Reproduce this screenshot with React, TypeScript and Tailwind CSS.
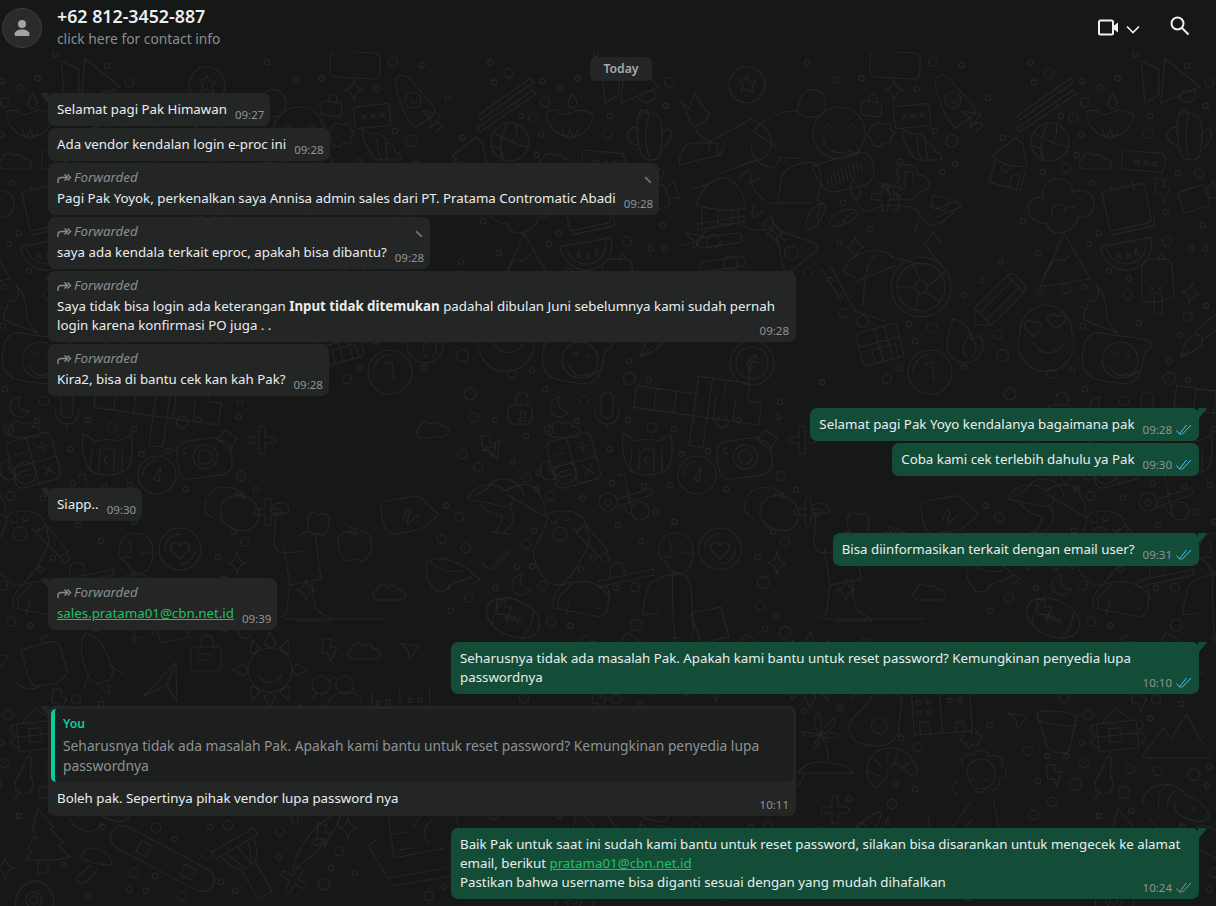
import React from "react";

const F = "[font-family:'Noto_Sans','Open_Sans',sans-serif]";

const z7 = [[22,37,8],[106,90,8],[185,85,8],[350,117,8],[399,35,14],[485,45,8],[405,243,8],[455,273,18],[691,38,8],[746,70,14],[702,97,8],[847,93,8],[901,113,8],[855,157,14],[563,145,8],[783,198,8],[820,203,14],[843,254,8],[1043,251,14],[1050,197,8],[953,85,8],[1007,12,8],[1161,48,8],[1228,97,14],[1217,168,8],[608,264,8],[830,315,8],[798,355,14],[728,366,8],[875,400,8],[1134,370,8],[1197,370,14],[299,335,8],[466,342,8],[427,367,8],[262,410,8],[129,458,8],[209,536,8],[119,577,8],[24,668,14],[90,690,8],[119,740,8],[131,790,14],[188,814,18],[327,822,8],[396,833,14],[345,874,8],[492,735,8],[545,691,8],[602,635,8],[669,514,8],[716,609,8],[797,716,14],[852,712,8],[720,725,8],[983,735,14],[927,663,8],[986,684,8],[867,582,8],[896,549,8],[1097,485,8],[1209,526,8],[1101,574,14],[1172,595,8],[1215,595,8],[1086,620,8],[1218,768,8],[1163,800,14],[1016,820,8],[848,827,8],[594,854,14],[608,917,18],[260,987,14],[298,955,8],[66,996,8],[492,952,8],[755,971,14],[817,961,8],[855,1018,8],[1140,855,8],[1107,933,8],[1108,985,18],[1165,991,8],[630,1032,18]];
const z9 = [[100,45,18],[245,100,14],[308,90,9],[120,165,18],[130,232,14],[195,240,8],[345,148,9],[462,182,14],[356,270,14],[440,243,8],[288,288,8],[97,342,14],[145,382,14],[248,365,8],[325,397,8],[288,413,14],[320,447,8],[362,468,14],[458,475,8],[88,532,14],[48,497,8],[35,597,14],[108,625,14],[288,613,14],[312,572,8],[260,680,8],[307,678,8],[452,688,8],[197,745,8],[338,737,14],[117,773,14],[62,812,8],[363,845,14],[421,857,8],[619,855,18],[558,744,8],[615,742,14],[489,653,8],[563,555,8],[633,603,8],[540,327,8],[547,430,8],[643,438,8],[720,435,8],[755,342,8],[834,333,8],[888,447,8],[676,516,8],[733,546,8],[877,246,18],[925,240,8],[665,263,14],[732,268,8],[594,240,8],[1045,140,14],[1050,187,8],[1045,230,8],[1095,112,18],[1176,126,8],[1052,408,14],[1098,450,8],[1030,575,8],[1065,605,14],[983,652,8],[1000,727,18],[990,797,14],[1040,828,8],[1005,866,8],[1065,877,18]];
const z11 = [[13,63,8],[120,52,8],[303,145,8],[353,172,14],[345,298,8],[285,281,8],[147,327,8],[276,342,14],[569,106,8],[683,182,14],[743,198,8],[799,198,8],[851,218,14],[845,158,8],[714,272,8],[826,284,18],[972,308,18],[989,236,14],[1073,243,14],[1182,254,18],[1227,230,8],[1222,288,8],[755,336,14],[700,375,14],[897,377,8],[994,362,8],[864,76,14],[1051,84,8],[1143,42,8],[792,25,14],[1068,28,14]];
const z12 = [[57,18,8],[309,52,8],[468,53,14],[522,88,8],[631,52,8],[684,46,14],[840,64,14],[621,134,14],[837,141,8],[1016,124,14],[993,174,8],[1065,188,8],[401,188,14],[465,199,8],[191,164,8],[662,217,8],[706,242,8],[387,239,8],[437,242,8],[263,259,8],[547,259,14],[972,222,18],[1286,258,14],[1331,230,8]];

const mod = (x: number) => ((x % 540) + 540) % 540;
const rings: number[][] = [
  ...z7.map(([a, b, r]) => [mod(260 + a / 3), 50 + b / 3, r / 3]),
  ...z9.filter(([, b]) => b > 180).map(([a, b, r]) => [mod(430 + a / 3), 340 + b / 3, r / 3]),
  ...z11.map(([a, b, r]) => [mod(260 + a / 3), 690 + b / 3, r / 3]),
  ...z12.map(([a, b, r]) => [a / 3, 810 + b / 3, r / 3]),
];

const sparkle = "M0-11C2-3 3-2 9 0C3 2 2 3 0 11C-2 3-3 2-9 0C-3-2-2-3 0-11Z";
const lock = "M-7-3h14a3 3 0 0 1 3 3v8a3 3 0 0 1-3 3h-14a3 3 0 0 1-3-3v-8a3 3 0 0 1 3-3zM-4-3v-4a4 4 0 0 1 8 0v4";
const cross = "M-3-11a3 3 0 0 1 6 0v8h8a3 3 0 0 1 0 6h-8v8a3 3 0 0 1-6 0v-8h-8a3 3 0 0 1 0-6h8z";
const cloud = "M-11 7a5 5 0 0 1-2-10a6 6 0 0 1 11-3a6 6 0 0 1 10 3a5 5 0 0 1 4 10z";
const moon = "M2-10a10 10 0 1 0 9 14a9 9 0 0 1-9-14z";
const bolt = "M-7-12l9 2-2 7 7 1-7 14-1-8-7-1z";
const plane = "M-10-7L9-4L-1 9L-2 0z";

type P = [number, number, number, string];
const shapes: P[] = [
  [354, 90, 0, sparkle], [332, 105, 8, lock], [237, 563, 0, sparkle], [111, 293, 10, sparkle], [315, 247, 0, sparkle], [235, 233, -10, sparkle],
  [306, 590, 0, sparkle], [155, 750, 0, sparkle], [348, 828, 0, sparkle], [5, 868, 0, sparkle], [410, 650, 0, plane],
  [522, 407, 0, "M-9-2h14a5 5 0 0 1 5 5v9a5 5 0 0 1-5 5h-14a5 5 0 0 1-5-5v-9a5 5 0 0 1 5-5zM-6-2v-7a6 6 0 0 1 12 0v7M0 4a3 3 0 0 1 2 5l2 5h-7l2-5a3 3 0 0 1 1-5z"],
  [18, 407, 0, moon], [520, 585, 0, moon], [8, 470, 0, moon],
  [268, 512, 0, cross], [345, 197, 0, cross], [262, 440, 0, cross], [295, 810, 0, cross], [294, 880, 30, cross],
  [16, 162, 0, cloud], [25, 430, 0, cloud], [433, 430, -5, cloud], [390, 593, 0, cloud], [365, 652, 0, cloud],
  [83, 190, 0, bolt], [490, 446, -10, bolt], [515, 775, -10, bolt], [60, 700, 0, bolt], [330, 650, 0, bolt], [325, 835, 0, bolt], [505, 610, -10, bolt],
  [540, 660, 0, plane], [493, 449, 90, plane], [352, 192, 0, plane], [432, 118, 0, plane], [155, 240, 0, plane], [485, 668, 0, plane], [478, 720, 0, plane],
  [165, 680, -15, "M-25 10L15-14L6 24L0 6zM0 6L15-14"],
  [299, 133, 0, "M-26 0a26 26 0 1 0 52 0a26 26 0 1 0-52 0M-15-4c1-5 6-5 7 0M9-4c1-5 6-5 7 0M-16 4c2 14 16 20 28 13M10 16l6 7 5-5-5-7"],
  [302, 172, -12, "M-28-12l46-4c8 0 14 5 14 12v4c0 10-5 18-18 18h-24c-10-1-16-12-18-30zM-16 4v6M-12 0v12M-8-3v14M-4-1v12M0-5v14M4-2v10M8-7v14M12-5v12M16-8v12M20-6v8"],
  [247, 143, 0, "M-33-12c12-14 26-20 42-20M-34-12l24 16M-36 2c0 14 10 22 24 22c6-8 4-10 4-10c10 0 22 3 22 0M-37 30c0 14 8 24 16 28M-16 60l18 0 24 0M-10 60l6-30M-4 30c10-10 28-14 34-8c6 8 4 22 0 34l4 4M10-32c4 6 14 8 24 4c4-4 6-10 4-16c-2-8-12-12-18-8c-8 4-8 12-10 20M-32 60c-4 8-4 14 0 14l8-6"],
  [177, 127, 0, "M-36-26l8 8 6-16 8 14 6 6c-2 8-8 12-16 12c-6-6-6-14-12-24zM-22 0c2 8 8 12 16 14l40-22c20 8 26 26 14 38l-44 16M-38 38c0-8 4-18 10-22l30 0c-4 6-4 8 0 12zM-8 14v10M8 14c0 6-4 12-6 16"],
  [180, 200, 0, "M-24 4c6-16 16-26 26-26c12 0 22 14 24 30c-10 4-40 2-50-4zM-18 8v18M18 8v18M-22 24l46-8v6l-46 8zM-14 30c-6 12-20 14-26 16M-2 10h14v14h-14zM22 24c8 10 18 4 28 6M-28-12c4 2 14-4 22-6M20-22l8-8M26-16l14-6"],
  [207, 85, 0, "M-18 0a18 18 0 1 0 36 0a18 18 0 1 0-36 0M0-9l3 6 6 0-4 4 2 7-7-4-6 3 2-7-4-5 6 0z"],
  [243, 243, -40, "M-4-28h12v4h-2v14l18 30a5 5 0 0 1-5 7h-30a5 5 0 0 1-5-7l16-30v-14h-4zM0 6a7 7 0 1 0 0 14a7 7 0 1 0 0-14M6-8a4 4 0 1 0 0 8"],
  [183, 253, -8, "M-20-18h36a5 5 0 0 1 0 10h-36a5 5 0 0 1 0-10zM-8-20a7 7 0 1 0 0 14a7 7 0 1 0 0-14M-20 6h36a5 5 0 0 1 0 10h-36a5 5 0 0 1 0-10zM6 4a7 7 0 1 0 0 14a7 7 0 1 0 0-14"],
  [280, 218, 15, "M-4-14c8-4 8 8 4 18c-2 8-10 14-12 6c-2-8 2-20 8-24zM-2-14c-2 6-2 14 2 18"],
  [306, 222, 50, "M-4-14c8-4 8 8 4 18c-2 8-10 14-12 6c-2-8 2-20 8-24zM-2-14c-2 6-2 14 2 18"],
  [381, 287, 0, "M-30 0a30 30 0 1 0 60 0a30 30 0 1 0-60 0M-24 0a24 24 0 1 0 48 0a24 24 0 1 0-48 0M-6 0a6 6 0 1 0 12 0a6 6 0 1 0-12 0M0-6L-8-23M6 0L23 -14M4 5L18 14M-2 6L-6 24M-6 0H-24M-30-30l32 8M-28-30c-10-10-40-10-50 14l12 6M-90-20l24 44l30 10M-44-32c-8 2-12 12-14 50M-100 -18l18 28M-64-6l40-16M20-44l-8-12-8 14 20 24"],
  [365, 205, 0, "M-52-8c-4-10-2-14 0-18l8 12c0 6-4 10-8 6zM-50-6c4 8 8 14 14 12c8-4 18-6 24-6c6 0 18 2 24 4c4 10 10 18 18 16c8-2 14-8 18-12M-6 -24c-6 4-8 10-2 16c8 4 20 6 22-6c6 2 12-4 10-10c-4-6-8-6-12-6c2-8-6-12-12-10c-8 0-10 8-6 12zM14 14l-4 14M28-10l16 4-4 12-14-4zM30 4l22-8 4 6-24 10"],
  [367, 178, 0, "M-8 8a3 3 0 1 0 6 0v-14l8-1v12a3 3 0 1 0 0 0M-14 30a3 3 0 1 0 6 0v-12l3-1"],
  [465, 293, -45, "M-32-11h46a6 6 0 0 1 6 6v12a6 6 0 0 1-6 6h-46l-12-12zM-32-11v24M14-11v24M-30-4h44M-30 6h44M-44 1l6-6"],
  [425, 337, 0, "M-12-18c-4 10-6 18-6 26a18 18 0 0 0 36 0c0-4-2-8-4-10c-2 2-4 4-8 4c2-8-8-18-18-20zM2 20c-8-6-2-14 2-22c6 4 10 14 4 22"],
  [343, 345, -15, "M-20-18h34a4 4 0 0 1 4 4v26a4 4 0 0 1-4 4h-34a4 4 0 0 1-4-4v-26a4 4 0 0 1 4-4zM-24-4h42M-4-18v34M6-18v34M-12 2h24v14h-24z"],
  [390, 372, 0, "M-22 0a22 22 0 1 0 44 0a22 22 0 1 0-44 0M-17 0a17 17 0 0 1 17-17M-6-8l8-2 2 18"],
  [508, 333, 0, "M-28 0a28 28 0 1 0 52 0a26 28 0 1 0-52 0M-14-10c-6-6-12 0-8 6l8 8 8-10c0-6-6-6-8-4zM10-16c-4-6-12-2-10 4l8 8 10-8c2-6-6-8-8-4zM-14 10c6 12 20 14 30 0"],
  [40, 360, 8, "M-26-24h44c8 0 12 3 12 6l-6 6c-2 10 0 24-6 30c-6 6-24 6-40 4c-10-2-16-10-16-24c0-12 4-20 12-22zM-18 0a18 18 0 1 0 36 0a18 18 0 1 0-36 0M-8-4c1-4 4-4 5 0M4-4c1-4 4-4 5 0M-10 6c4 10 14 12 20 6M10 16l6-4M10 16l10-8"],
  [117, 343, -40, "M-22 0l14-8h12l4 6-4 6H-8zM-22 0h12M4-8l4-2h28v12H8l-4-2"],
  [78, 293, 0, "M-16-26c0-8 8-8 16-8c8 0 12 0 14 6l2 30c-4 6-30 10-32 4zM-4 8v10c0 4 8 4 8 0V6M-8-6l4 2-4 2M4-6l-4 2 4 2M-4 0h8v6c0 4-8 4-8 0z"],
  [20, 313, 0, "M-20-8c2 4 6 4 8 2c-6 6-6 14 0 14c8 6 18 6 30 12c-8-8-12-10-12-26c-2-10-2-14-10-22c4 8 4 14-4 16c-2-2-6 2-4 6"],
  [47, 250, -10, "M-26-8h52c0 18-12 28-26 28c-14 0-26-12-26-28zM-20-4c2 10 10 18 20 18c12 0 18-8 20-18M-9 0l-2 6 4 0zM0 2l-2 6 4 0zM9 0l-2 6 4 0z"],
  [47, 205, -12, "M-22-18h40a3 3 0 0 1 3 3v30c0 3 0 7-6 7h-34c-3 0-3-2-3-5v-32a3 3 0 0 1 0-3zM-12-22v8M10-22v8M-20 26h42c2-4 2-8 2-12"],
  [117, 198, -18, "M-14-11h22a3 3 0 0 1 3 3v16a3 3 0 0 1-3 3h-22a3 3 0 0 1-3-3v-16a3 3 0 0 1 3-3zM11-5l10-6v18l-10-4"],
  [522, 207, 0, "M-4 26c-6 0-12-6-10-10c-8 2-20-4-20-14c0-10 10-14 16-10c-4-10 4-20 14-20c10 0 16 8 14 14c8-6 24 0 22 12c0 8-8 14-16 12c0 8-10 16-20 16zM-10 10c-2-8 2-14 10-12M2 6c0-8 8-8 12-4"],
  [532, 263, 0, "M-8-30l-24 54l50-8l-26-46M-28 12c6-6 6-12 12-16c6 4 10 0 14-4"],
  [470, 167, 15, "M-20-6l18-24 8 4 10 20c-10 6-26 6-36 0zM-16-4v24h32v-20M-8 2a4 4 0 1 0 8 0a4 4 0 1 0-8 0M4 20v-10a4 4 0 0 1 8 0v10"],
  [510, 142, 0, "M-19 0a19 19 0 1 0 38 0a19 19 0 1 0-38 0M-16-9c10 6 22 12 34 14M-3-19c-4 10-8 20-5 38M6-18c2 8 0 14-4 18M-18 4c6 0 10 2 12 14"],
  [65, 161, 5, "M-20-9h38v3l2-1v10l-2 7h-38a3 3 0 0 1-3-3v-12a3 3 0 0 1 3-4zM-10 2a2 2 0 1 0 4 0a2 2 0 1 0-4 0M-1 2a2 2 0 1 0 4 0a2 2 0 1 0-4 0M8 2a2 2 0 1 0 4 0a2 2 0 1 0-4 0"],
  [507, 100, 0, "M-30 16L24-22l3 4L-27 20zM10-12l4 5M-30 28L26-10l3 4L-27 32zM8 2l4 5"],
  [417, 100, 0, "M-22-20c4-6 10-6 14-2l26 30-2 8-18 12c-10-10-18-30-20-48zM-12 0a8 8 0 1 0 16 0a8 8 0 1 0-16 0M-6 0a3 3 0 1 0 6 0M12 28l10-6 4 4-8 6"],
  [380, 148, 0, "M-18-18c6 0 8 6 14 4c6-2 10 4 10 10c6-2 10 4 8 8c6 0 10 6 6 8H-2c-8-4-14-16-16-30zM-2-10c-2 6 0 16 4 22M6-4c0 4 0 12 2 16"],
  [30, 120, 0, "M-24-8c4-2 8-2 12-2c0 6 8 6 20 0c8 0 10 2 16 4c-2 14-12 22-24 24c-12-2-24-12-24-26zM2-26c4 4 6 8 4 12c-2 4-8 2-8-2c0-4 2-6 4-10zM-8 10l4 8 4-8 4 8 4-8"],
  [107, 137, 0, "M-8-22c8-4 16-2 20 2c4 6 4 28 0 40c-4 4-12 4-16 0c-6-10-8-32-4-42zM2-22c-4 10-4 30 0 42M-8-8c-6-4-10 0-12 6c0 6 6 10 12 10M14-2c4-4 8-8 10-4c2 6-4 14-8 18M-8-22l2-6 3 3 3-3 2 6"],
  [83, 83, 0, "M-22-22l18 8v26l-14 8zM-2 20l4-44 26 20 8 8-28 12zM20 8h12v8l-8 4-8-4z"],
  [373, 115, -6, "M-16-10h30a3 3 0 0 1 3 3v16a3 3 0 0 1-3 3h-30a3 3 0 0 1-3-3v-16a3 3 0 0 1 3-3zM-11-1l4 4M-7-1l-4 4M-2-1l4 4M2-1l-4 4M7-1l4 4M11-1l-4 4"],
  [341, 133, 0, "M-10-6l6-4 6 2 6-2 2 6 4 4-4 4 0 6-8 0-4 4-6-2-2-6-4-4z"],
  [163, 403, 8, "M-68-8h60v-18h50v-22h12M-68-8v22h126v-22h-14v-18h-54M-48-8v22M-28-8v22M-8-8v22M12-8v22M32-8v22M-8 14v30h14v-30M6-26v40M20-26v18M-8-26v18"],
  [212, 363, 0, "M-22 0a22 22 0 1 0 44 0a22 22 0 1 0-44 0M-16 0a16 16 0 1 0 32 0a16 16 0 1 0-32 0M4-8L-4 8M4-8c2 6 0 12-8 16c-2-6 0-12 8-16z"],
  [67, 412, 0, "M-6-14a6 6 0 0 1 12 0v14a6 6 0 0 1-12 0zM-12-2c0 10 6 14 12 14c6 0 12-4 12-14M0 12v6"],
  [35, 462, -15, "M-18-26h34a6 6 0 0 1 6 6v36a6 6 0 0 1-6 6h-34a6 6 0 0 1-6-6v-36a6 6 0 0 1 6-6zM-24 0h46M-2-26v48M-18-12h10M6-13h10M11-18v10M6 6l10 10M16 6L6 16M-23 8a11 11 0 1 0 22 0a11 11 0 1 0-22 0M-18 6h12M-18 11h12"],
  [107, 453, 0, "M-24-20l12 8c8-2 16-2 24 0l12-6c2 14 2 26-4 34c-10 8-30 8-38 0c-6-10-8-24-6-36zM-16-4c4 6-4 10 0 22M-8-4c4 6-2 10 0 22M8-4c-4 6 2 10-2 22M16-4c-4 6 2 10-2 22M-4-4h10M0 4a3 3 0 1 0 1 6"],
  [157, 475, 0, "M-19 0a19 19 0 1 0 38 0a19 19 0 1 0-38 0M-14 0a14 14 0 0 1 14-14M-4 4l8-12-2 14z"],
  [205, 455, -8, "M-18-16h30l6 4c4 0 8 4 8 8v14c0 8-6 12-12 12h-32c-6 0-10-6-10-12v-14c0-8 6-12 10-12zM-12 2a12 12 0 1 0 24 0a12 12 0 1 0-24 0M-7 2a7 7 0 1 0 14 0a7 7 0 1 0-14 0M-18-10a3 3 0 1 0 1 6M14-14l10-8 10 10-8 10z"],
  [87, 507, 0, "M-28-5a9 9 0 1 0 18 0a9 9 0 1 0-18 0M-10-8l32-10a3 3 0 0 1 2 6L-10 0M-8-30a3 3 0 0 1 6 0l6 30M4 4a9 9 0 1 0 18 0a9 9 0 1 0-18 0M-2 0c2 6 2 4 8 8M-16-5a3 3 0 1 0 0 1"],
  [500, 500, 0, "M-32-1c6-16 26-18 38-8c14-10 30-8 34 4c4 6 6 14 6 22L8-5M-32-1L6 7c8-2 8-6 8-14M-26-4c6-2 14-6 18-14c16-8 30 2 32 14M-20 4c8 8 16 12 22 12c0 6-2 8-6 16l-6 0 20 2M10 8c6 6 4 18-6 24"],
  [23, 540, 0, "M-30 10c2 20 16 40 30 34c14-14 22-30 26-42c-2-14-2-24-12-28c-6-4-22-4-28 0c-4 6 0 12-16 36zM-10-6a7 7 0 1 0 14 0a7 7 0 1 0-14 0M-12-20a3 3 0 1 0 6 0M0-22a3 3 0 1 0 6 0M10-12a3 3 0 1 0 6 0"],
  [70, 547, 0, "M-24-22l-10 8 24 24 8-6zM-10 10l4 6 6-4-4-6M-12 34l56-12v6l-56 12zM0 30v-10c4-6 10-6 14-2v8"],
  [137, 573, 0, "M-18-22c0-10 6-18 16-18c12 0 18 8 18 18c0 12-4 22-14 22c-6 0-10-4-12-10c-4-2-8-6-8-10zM-14-16h10M4-20h10M-8-32c4 6 2 12 0 12M-26 10c14-8 20-10 34-8c8 6 8 40 8 60M-26 10c-6 10-8 26-8 32l16-2M-4 0c-2 20 0 40 2 70M-6 66l10-2M14 40l30-6 8 30-28 6z"],
  [180, 549, 0, "M-21 0a21 21 0 1 0 42 0a21 21 0 1 0-42 0M-15 0a15 15 0 0 1 15-15M15 0a15 15 0 0 1-15 15M0-4c-6-6-12 0-8 6l8 8 8-8c4-6-2-12-8-6z"],
  [40, 600, 0, "M-26 8c-4-14 6-26 22-26c14-2 30 4 34 18M-26 8l42 8c8 2 12-4 12-12c2-6 2-14-2-18M-8-16l-14 14v10M-14 14l4-14M18 8a1 1 0 1 0 2 0"],
  [513, 618, 25, "M-28 0c0-10 12-18 28-18c18 0 28 8 28 18c0 8-10 18-28 18c-16 0-28-8-28-18zM-16-14c-4 8-4 20 0 28M16-14c4 8 4 20 0 28M-10 0h20M-6-3v6M-2-3v6M2-3v6M6-3v6"],
  [450, 573, 0, "M-24-8c4-8 16-8 26-4c10 4 18 8 22 14c-8 6-14 6-20 8c-4 2-8 12-18 8c-6-6-10-12-10-26zM-20-12c6 8 16 12 32 10M24 2l6 4-8 6M0 12a2 2 0 1 0 0 4"],
  [497, 560, 0, "M-16 2l8 8L8-8M-4 10L14-10"],
  [230, 500, 0, "M-22-4c4-8 14-10 20-8c8-2 14 6 16 10M-16 18c-8-2-12-10-8-18M-10 12c0-12 10-18 22-16c12 2 20 14 16 24c-4 10-12 12-20 10c-10-2-18-8-18-18zM4-4l2-4 3 4 3-4 2 4"],
  [300, 547, 0, "M-28-34c-2-6 2-10 8-10c8 0 10 6 8 10zM-24-34l-2 30c0 6 4 10 10 10l20-2M-2-10c8-8 16-6 18 2c2 14 2 30 6 40l-32 6l-6-38M-10 38c-2 10-2 20-4 30l-6 2M12 34c0 10 2 24 6 30c4 4 14 6 14 10h-36M8-24c-2-10 6-14 10-8c8-4 14 2 10 10c2 8-6 12-10 8c-6 4-12-4-10-10zM-16 72h100"],
  [355, 543, 0, "M0-8c-10-8-18 0-17 8c0 10 6 18 12 18c2-2 8-2 10 0c6 0 12-8 12-16c0-10-8-18-17-10zM0-8c0-4 2-6 4-8M0-8c-4-2-6-6-6-8c4 0 8 4 6 8z"],
  [410, 513, -10, "M-20-16h28c6 0 12 14 20 22c-8 6-14 10-22 12h-24c-6 0-10-6-10-14v-8c0-8 2-12 8-12zM-8 6c2-8 8-12 8-8c0 4-6 10-4 12c4 0 4-4 12-6"],
  [97, 663, -20, "M0-32c12 8 14 24 12 46l-6 6H-6l-6-6c-2-22 0-38 12-46zM-12 8l-10 12M12 8l10 12M-4 24l4 10 4-10"],
  [270, 670, 0, "M-22 0a22 22 0 1 0 44 0a22 22 0 1 0-44 0M0-22l-6-4 6-12 6 12zM22 0l4-6 12 6-12 6zM0 22l-6 4 6 12 6-12zM-22 0l-4-6-12 6 12 6zM-16-16l-4-2 2-12 8 8zM16-16l4-2-2-12-8 8zM-12 4c4 10 18 12 24 0M-4-6v1M4-6v1M-16 16l-4 2 2 12 8-8zM16 16l4 2-2 12-8-8z"],
  [45, 660, 0, "M-24-10l28-8c6-2 10 2 12 6l6 24c-2 8-8 8-12 12l-20 2c-8-4-10-24-14-36zM-4-18c-2-6 6-8 8-4M-30 20c4 8 14 12 26 6"],
  [205, 655, 0, "M-14-8h26a4 4 0 0 1 4 4v16a4 4 0 0 1-4 4h-22a4 4 0 0 1-4-4zM-8-2l16 2M-8 4l14 2M-4-8v-6a6 6 0 0 1 12 0v6"],
  [330, 685, 0, "M-18 0a9 9 0 1 0 18 0a9 9 0 1 0-18 0M0-4c2-2 4-4 6-4M6 0a9 9 0 1 0 18 0a9 9 0 1 0-18 0M-14 8l-4 6"],
  [280, 733, 0, "M0 2c-6-8-8-18-2-22c4 2 4 10 2 22M0 2c4-6 10-16 14-16c4 2 0 10-14 16M0 2c8-2 16-4 18 0c-2 4-12 4-18 0M0 2c-6-2-16-4-18-2c0 4 10 4 18 2M0 2c-4 6-8 12-6 14c4 0 6-8 6-14M2 4c6 10 6 16 6 24M-22 40c8-12 22-12 32-10c10 0 20 4 24 10zM-16 42c-4 6-4 8-6 12"],
  [335, 722, 0, "M-4-24c-4 10-22 18-22 30c0 14 14 18 30 18c12-2 22-8 20-24c0-10 4-16 2-24c-8-8-22-8-30 0zM-4 4a8 8 0 1 0 16 0a8 8 0 1 0-16 0"],
  [403, 713, -4, "M-30-24v44h58v-44M-2-24v44M-24 20v-12h10v12M12 20v-10h8v10M-26-14h4v4h-4zM-16-14h4v4h-4zM-26-4h4v4h-4zM-16-4h4v4h-4zM6-14h4v4h-4zM16-14h4v4h-4z"],
  [432, 742, 0, "M0-8c-2-8 6-8 4 0c6-2 8 6 2 6c4 4-2 8-6 4c-2 6-8 4-6-2c-6 2-8-4-2-6c-4-4 4-8 8-2z"],
  [517, 727, 0, "M-20-14c8-4 32-2 40 4l-2 8-6 26c-6 4-18 2-22-4zM-20-14l0 6c8 6 30 8 40 6"],
  [37, 730, -6, "M-20 20h40M-20 5h40M-20-8h40M-20-8v28M20-8v28M-8-2h12v14h-12zM-14-8l14-14 16 14M-22-8a5 5 0 1 0 0 10M-22 5a5 5 0 1 0 0 10M22-8a5 5 0 1 1 0 10M22 5a5 5 0 1 1 0 10"],
  [93, 740, 0, "M-32 18l22-30 8 10 16-24 16 30M-32 18h70"],
  [350, 770, 0, "M-14 18c-10-6-12-24-4-32c6-8 20-10 30-6c8 4 14 14 16 22l-8 4c-4-6-8-12-14-12c-6 0-10 6-10 14zM-16-12l8 10M-4-18l2 12M8-18l-4 12M20-8l-10 8M-22 2l12 4"],
  [437, 787, 0, "M-10-16c0-8 8-12 14-12c8 0 14 6 14 14c0 10-6 16-14 16c-8 0-14-8-14-18zM-6-6c1-2 3-2 4 0M8-6c1-2 3-2 4 0M-2 4c4 2 8 2 10-1M-14-22c-6-8 8-14 10-10c6-8 16-4 16 2c8-4 16 2 12 8c8 4 6 14-2 14c2 8-4 14-10 10M-18-6c-8 2-8 12 0 14M-6 14L-24 40M16 12l6 30"],
  [20, 780, 0, "M8-24l4 2-2 16c4 8 4 14 0 18c-6 4-12 2-14-2c-2-6 0-12 4-16zM0 12l-6 8"],
  [93, 803, 0, "M-30 0c0-12 12-20 26-18c8 0 14 6 16 10c12 2 22 12 24 22c-4 8-18 4-26 0c-6-2-10-8-8-16M-24 14c4 10 14 16 24 14c6-2 8-6 8-10M-4-18c-10 4-12 14-10 24M2-12c-6 4-8 10-8 18M22 4a2 2 0 1 0 1 4"],
  [42, 837, 0, "M-4-28l16 18-4 2 14 14-6 2 12 12c-10 4-40 4-44 2l6-8-4-2 8-16-4-2zM-4 24v12h10v-12M-8 0c2 2 4 2 4-1"],
  [165, 860, 28, "M-46-12h86c10 0 14 6 14 12s-4 12-14 12h-86c-10 0-14-6-14-12s4-12 14-12zM-30-6h12v12h-12zM20-6h12v12h-12z"],
  [243, 857, -30, "M-24-20l48 0v8l-48 0zM-18-12c0 14 8 24 18 24c10 0 18-10 18-24M-12-10l8 20M12-10l-8 20M0-12l4 22M-8 12l0 32l16 0 0-32"],
  [317, 840, 40, "M0-38c10 14 10 50 0 76c-12-22-12-56 0-76zM-2 0l8-6-2 10-6 2z"],
  [410, 850, 0, "M-34-10l-8 6 20 32 58-10M-22-36l6 44 50-10M-16-16l14-2M-12 0l14-2M-18 36l60-10M18-6c-6-10-4-18 4-24"],
  [93, 867, 0, "M-10-8c-4-6 4-12 14-10c10 2 16 10 14 16c-8 0-20-2-28-6zM-2-2l-12 10c-4 4-2 10 4 8c6-2 12-8 14-14"],
  [30, 893, -25, "M-20 10c2-10 10-20 24-20c10 0 16 10 16 20c0 10-10 18-20 18c-10 0-20-8-20-18zM0 0a8 8 0 1 0 1 16a8 8 0 1 0-1-16M0 4a4 4 0 1 0 1 8a4 4 0 1 0-1-8"],
];

function Doodles() {
  return (
    <svg aria-hidden="true" className="absolute inset-0" width="1216" height="906" viewBox="0 0 1216 906" fill="none">
      <defs>
        <g id="tile" stroke="#252727" strokeWidth="1.1" strokeLinejoin="round" strokeLinecap="round">
          {rings.map(([x, y, r], i) => (
            <circle key={i} cx={x} cy={y} r={r} />
          ))}
          {shapes.map(([x, y, a, d], i) => (
            <path key={i} d={d} transform={`translate(${x} ${y}) rotate(${a})`} />
          ))}
          <rect x="330" y="52" width="50" height="26" rx="6" transform="rotate(3 355 65)" />
        </g>
      </defs>
      <use href="#tile" x="-540" />
      <use href="#tile" x="0" />
      <use href="#tile" x="540" />
      <use href="#tile" x="1080" />
    </svg>
  );
}

function Fwd() {
  return (
    <div className="flex items-center h-[19px] -mt-[2px] mb-[2px] text-[13.4px] italic text-[#8b8e8f]">
      <svg width="15" height="12" viewBox="0 0 15 12" fill="none" stroke="#8b8e8f" strokeWidth="1.4" className="mr-[2px]">
        <path d="M1 11V8.5C1 6.5 2.5 5.5 4.5 5.5H10" />
        <path d="M7.5 2.5L10.5 5.5L7.5 8.5" />
        <path d="M10.5 2.5L13.5 5.5L10.5 8.5" />
      </svg>
      Forwarded
    </div>
  );
}

function Time({ t, check }: { t: string; check?: "blue" | "gray" }) {
  return (
    <span className="flex items-center text-[11.5px] leading-[15px] text-[#8f9394] whitespace-nowrap">
      {t}
      {check && (
        <svg width="16" height="11" viewBox="0 0 16 11" fill="none" strokeWidth="1" className="ml-[4px]" stroke={check === "blue" ? "#53bdeb" : "#8f9394"}>
          <path d="M0.5 6.5L3.5 10L10.5 1" />
          <path d="M5.5 10L6.5 10L15 1" />
          <path d="M3.5 10L5 10" />
        </svg>
      )}
    </span>
  );
}

function TailIn() {
  return (
    <svg className="absolute -left-[8px] top-0" width="9" height="12" viewBox="0 0 9 12">
      <path d="M9 0H1.5C0.5 0 0 1 0.8 1.6L9 11Z" fill="#242626" />
    </svg>
  );
}
function TailOut() {
  return (
    <svg className="absolute -right-[8px] top-0" width="9" height="12" viewBox="0 0 9 12">
      <path d="M0 0H7.5C8.5 0 9 1 8.2 1.6L0 11Z" fill="#144d37" />
    </svg>
  );
}
function Nick() {
  return <span className="absolute right-[7px] top-[16px] w-[8px] h-[2px] bg-[#6b6e6f] rotate-45" />;
}

function In({ children, time, mt, tail, fwd, nick }: { children: React.ReactNode; time: string; mt: string; tail?: boolean; fwd?: boolean; nick?: boolean }) {
  return (
    <div className={`flex justify-start pl-[48px] ${mt}`}>
      <div className="relative bg-[#242626] rounded-[7px] pl-[9px] pr-[6px] pt-[7px] pb-[5px] text-[#e9edef] flex items-end">
        {tail && <TailIn />}
        {nick && <Nick />}
        <div>
          {fwd && <Fwd />}
          <div className="leading-[19px] pb-[2px]">{children}</div>
        </div>
        <div className="ml-[8px] translate-y-[1px]">
          <Time t={time} />
        </div>
      </div>
    </div>
  );
}

function Out({ children, time, mt, tail, check = "blue" }: { children: React.ReactNode; time: string; mt: string; tail?: boolean; check?: "blue" | "gray" }) {
  return (
    <div className={`flex justify-end pr-[17px] ${mt}`}>
      <div className="relative bg-[#144d37] rounded-[7px] pl-[9px] pr-[7px] pt-[7px] pb-[5px] text-[#e9edef] flex items-end">
        {tail && <TailOut />}
        <div className="leading-[19px] pb-[2px]">{children}</div>
        <div className="ml-[8px] translate-y-[1px]">
          <Time t={time} check={check} />
        </div>
      </div>
    </div>
  );
}

function Wide({ side, children, time, mt, check, fwd }: { side: "in" | "out"; children: React.ReactNode; time: string; mt: string; check?: "blue" | "gray"; fwd?: boolean }) {
  const out = side === "out";
  return (
    <div className={`flex ${mt} ${out ? "justify-end pr-[17px]" : "justify-start pl-[48px]"}`}>
      <div className={`relative w-[748px] rounded-[7px] pl-[9px] pr-[7px] pt-[7px] pb-[4.5px] text-[#e9edef] ${out ? "bg-[#144d37]" : "bg-[#242626]"}`}>
        {out ? <TailOut /> : null}
        {fwd && <Fwd />}
        <div className="leading-[19px]">{children}</div>
        <div className="flex justify-end -mt-[12.5px]">
          <Time t={time} check={check} />
        </div>
      </div>
    </div>
  );
}

export default function App() {
  return (
    <div className={`relative w-[1216px] h-[906px] overflow-hidden bg-[#161717] text-[13.3px] ${F}`}>
      <Doodles />
      <div className="relative h-full flex flex-col">
        <header className="h-[52px] shrink-0 bg-[#161717] flex items-start pl-[2px] pr-[26px]">
          <div className="mt-[8px] w-[40px] h-[40px] rounded-full bg-[#2a2c2c] border border-[#3b3d3d] flex items-center justify-center">
            <svg width="18" height="18" viewBox="0 0 18 18" fill="#a3a5a5">
              <circle cx="9" cy="5" r="4" />
              <path d="M1.5 15.5C1.5 12 5 10.5 9 10.5S16.5 12 16.5 15.5C16.5 16.5 16 17 15 17H3C2 17 1.5 16.5 1.5 15.5Z" />
            </svg>
          </div>
          <div className="ml-[15px] mt-[6px]">
            <div className="text-[17.8px] leading-[20px] font-semibold text-[#eceeef]">+62 812-3452-887</div>
            <div className="text-[13.8px] leading-[19px] mt-[3px] text-[#8a8d8e]">click here for contact info</div>
          </div>
          <div className="ml-auto mt-[16px] flex items-start">
            <svg width="21" height="17" viewBox="0 0 21 17" fill="none" stroke="#f0f0f0" strokeWidth="2" className="mt-[3px] translate-x-px">
              <rect x="1" y="1.5" width="14" height="14" rx="1.5" />
              <path d="M16 6.5L20 3.5V13.5L16 10.5Z" fill="#f0f0f0" stroke="none" />
            </svg>
            <svg width="14" height="9" viewBox="0 0 14 9" fill="none" stroke="#f0f0f0" strokeWidth="1.6" className="ml-[8px] mt-[9px]">
              <path d="M1 1.5L7 7.5L13 1.5" />
            </svg>
            <svg width="20" height="20" viewBox="0 0 20 20" fill="none" stroke="#f0f0f0" strokeWidth="2" className="ml-[30px]">
              <circle cx="7.5" cy="7.5" r="6" />
              <path d="M12 12L18.5 18.5" />
            </svg>
          </div>
        </header>

        <main className="flex flex-col pt-[5px]">
          <div className="flex justify-center pl-[26px]">
            <span className="h-[24px] w-[62px] rounded-[6px] bg-[#242626] text-[12.2px] font-semibold text-[#a7aaab] flex items-center justify-center">Today</span>
          </div>

          <In mt="mt-[12px]" time="09:27" tail>Selamat pagi Pak Himawan</In>
          <In mt="mt-[2px]" time="09:28">Ada vendor kendalan login e-proc ini</In>
          <In mt="mt-[2px]" time="09:28" fwd nick>Pagi Pak Yoyok, perkenalkan saya Annisa admin sales dari PT. Pratama Contromatic Abadi</In>
          <In mt="mt-[2px]" time="09:28" fwd nick>saya ada kendala terkait eproc, apakah bisa dibantu?</In>
          <Wide side="in" mt="mt-[2px]" time="09:28" fwd>
            Saya tidak bisa login ada keterangan <b className="font-bold">Input tidak ditemukan</b> padahal dibulan Juni sebelumnya kami sudah pernah
            <br />
            login karena konfirmasi PO juga . .
          </Wide>
          <In mt="mt-[2px]" time="09:28" fwd>Kira2, bisa di bantu cek kan kah Pak?</In>

          <Out mt="mt-[12px]" time="09:28" tail>Selamat pagi Pak Yoyo kendalanya bagaimana pak</Out>
          <Out mt="mt-[2px]" time="09:30">Coba kami cek terlebih dahulu ya Pak</Out>

          <In mt="mt-[12px]" time="09:30" tail>Siapp..</In>

          <Out mt="mt-[12px]" time="09:31" tail>Bisa diinformasikan terkait dengan email user?</Out>

          <In mt="mt-[12px]" time="09:39" tail fwd>
            <a className="text-[#21c063] underline">sales.pratama01@cbn.net.id</a>
          </In>

          <Wide side="out" mt="mt-[12px]" time="10:10" check="blue">
            Seharusnya tidak ada masalah Pak. Apakah kami bantu untuk reset password? Kemungkinan penyedia lupa
            <br />
            passwordnya
          </Wide>

          <div className="flex justify-start pl-[48px] mt-[12px]">
            <div className="relative w-[748px] h-[110px] rounded-[7px] bg-[#242626] text-[#e9edef] p-[3px]">
              <TailIn />
              <div className="h-[73px] rounded-[5px] bg-[#1d1f1f] border-l-4 border-[#06cf9c] pl-[8px] pt-[6px]">
                <div className="text-[12.2px] leading-[18px] font-semibold text-[#06cf9c]">You</div>
                <div className="mt-[3px] leading-[20px] text-[#8f9293] text-[13.8px]">
                  Seharusnya tidak ada masalah Pak. Apakah kami bantu untuk reset password? Kemungkinan penyedia lupa
                  <br />
                  passwordnya
                </div>
              </div>
              <div className="pl-[6px] pt-[7px] leading-[19px]">Boleh pak. Sepertinya pihak vendor lupa password nya</div>
              <div className="flex justify-end pr-[4px] -mt-[11.5px]">
                <Time t="10:11" />
              </div>
            </div>
          </div>

          <Wide side="out" mt="mt-[12px]" time="10:24" check="gray">
            Baik Pak untuk saat ini sudah kami bantu untuk reset password, silakan bisa disarankan untuk mengecek ke alamat
            <br />
            email, berikut <a className="text-[#21c063] underline">pratama01@cbn.net.id</a>
            <br />
            Pastikan bahwa username bisa diganti sesuai dengan yang mudah dihafalkan
          </Wide>
        </main>
      </div>
    </div>
  );
}
